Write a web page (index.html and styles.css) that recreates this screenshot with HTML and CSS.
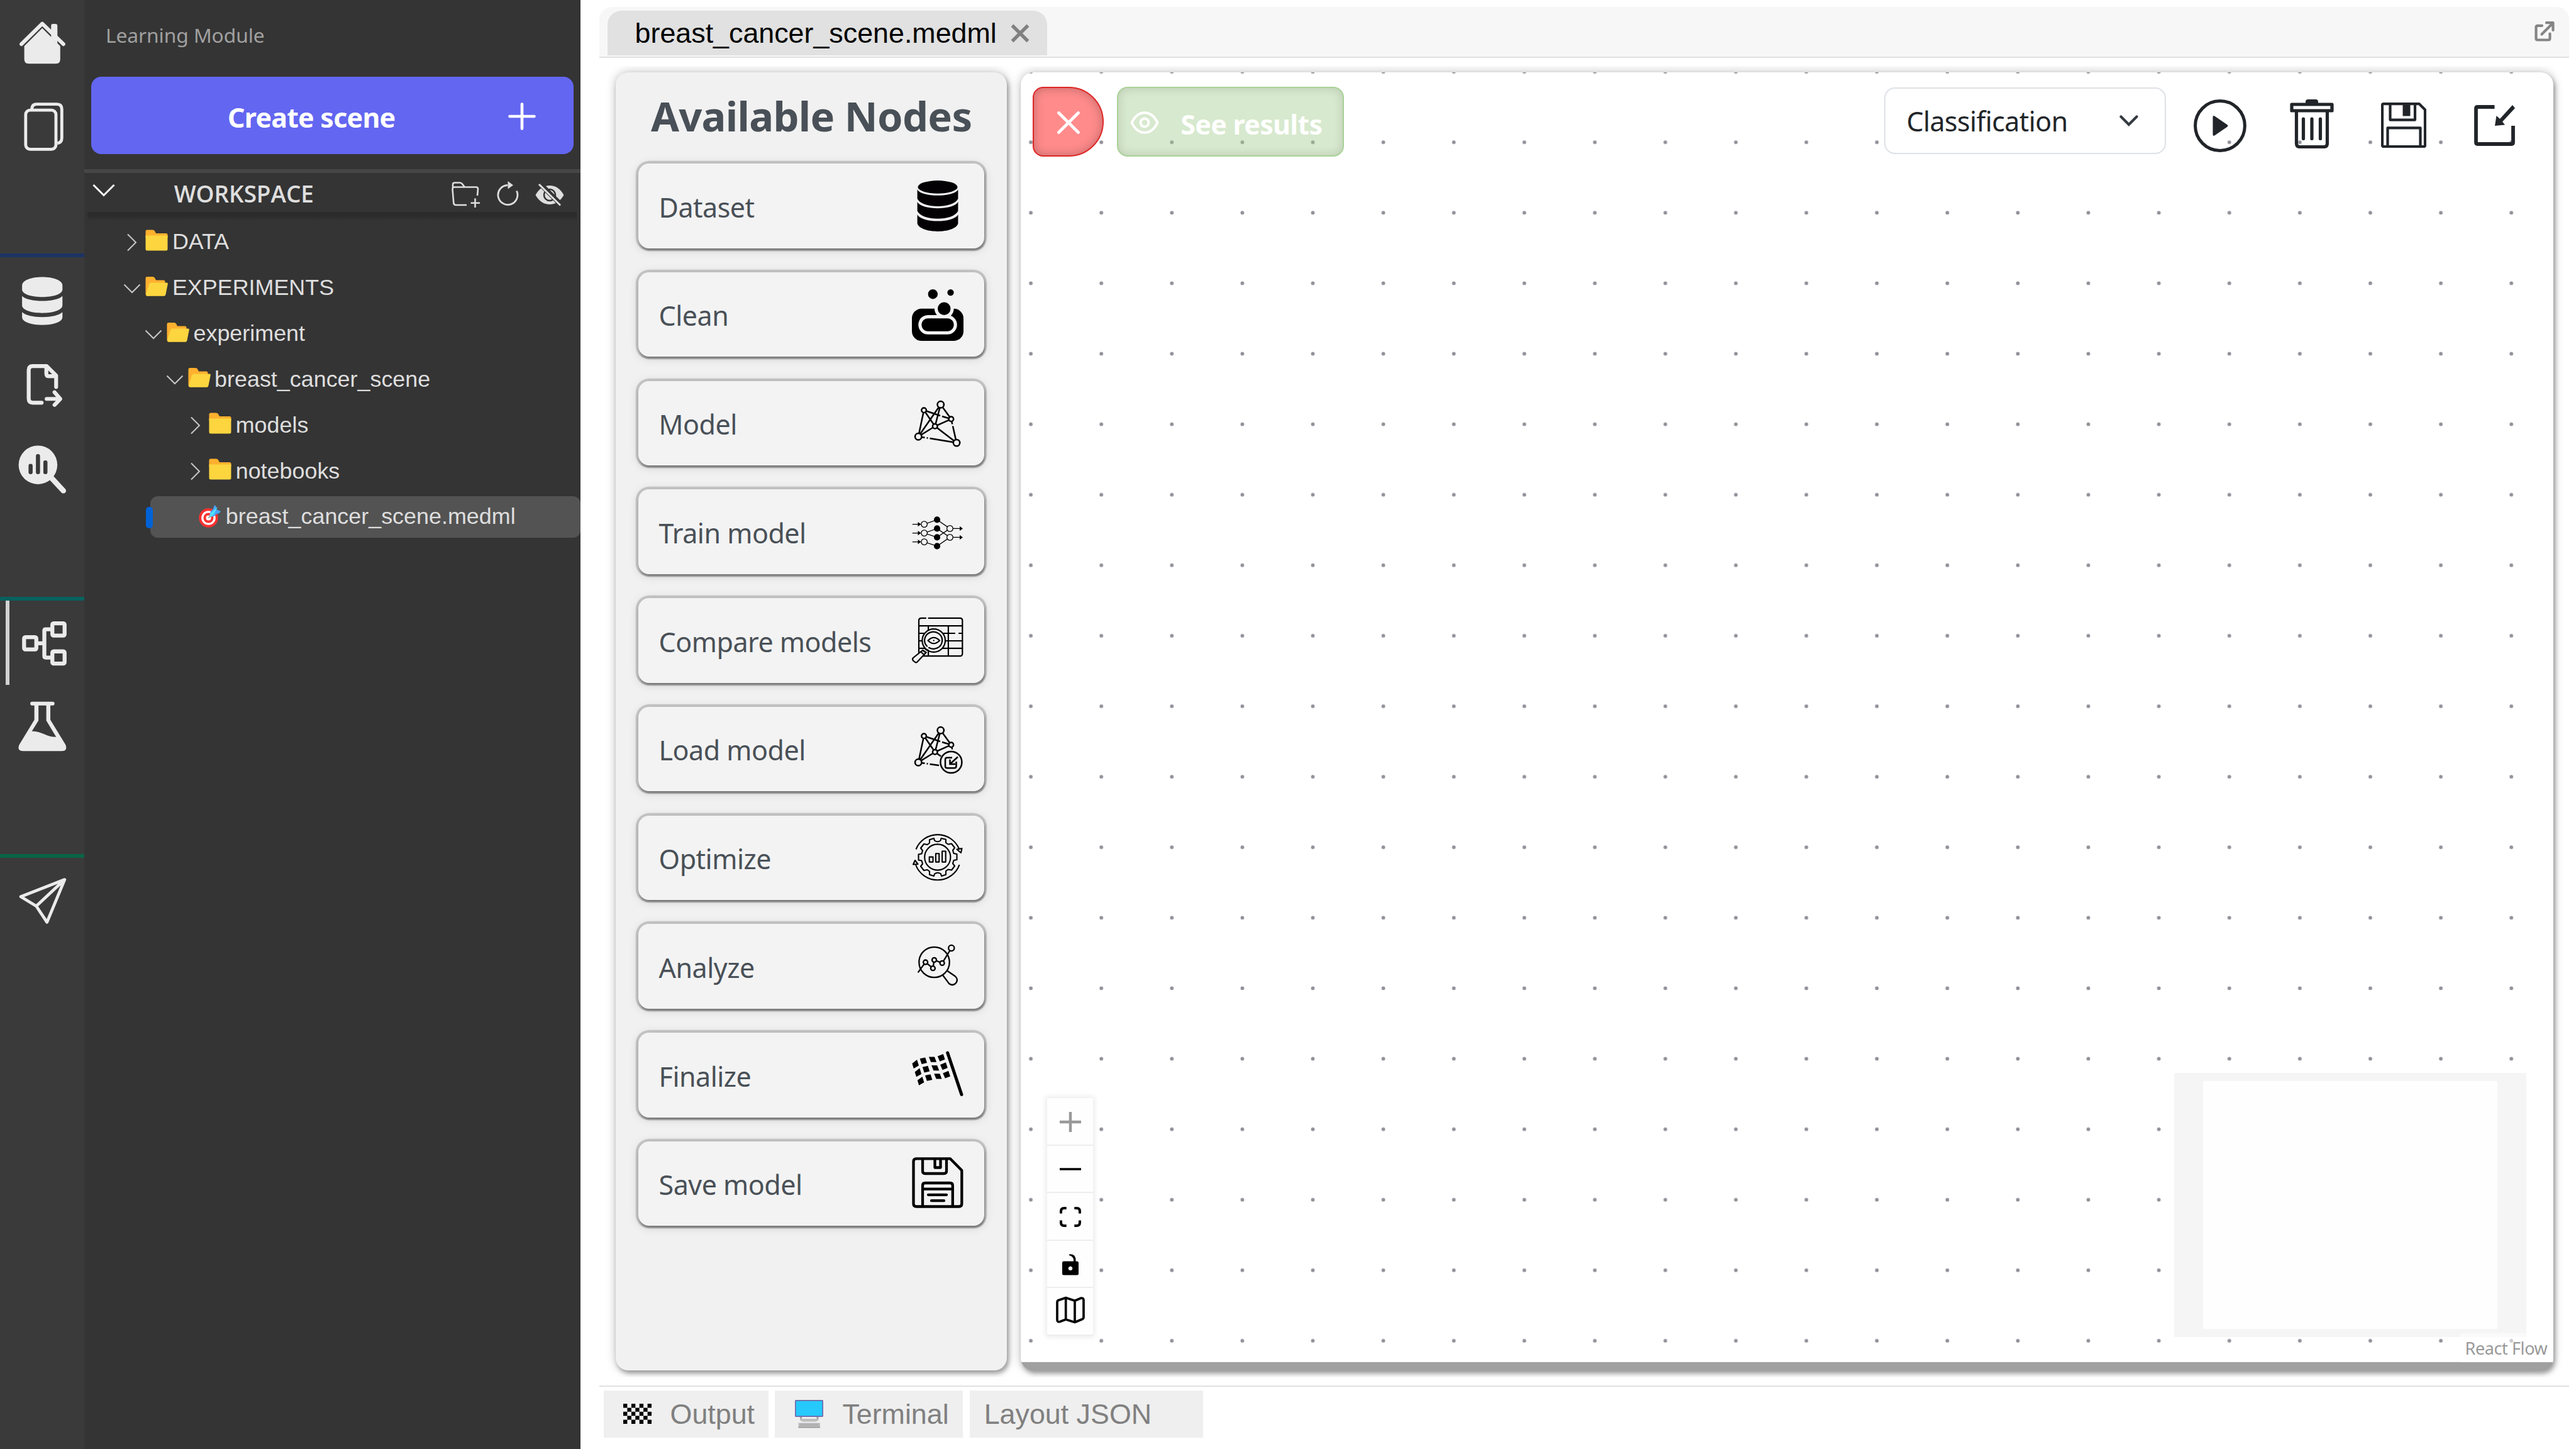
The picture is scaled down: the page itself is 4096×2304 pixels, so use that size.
FILE: index.html
```html
<!DOCTYPE html>
<html lang="en">
<head>
<meta charset="utf-8">
<title>Learning Module</title>
<link rel="stylesheet" href="styles.css">
</head>
<body>
<svg class="defs" aria-hidden="true">
  <symbol id="chev-right" viewBox="0 0 34 34"><path d="M10 4.500 23 17.500 10 30.500" fill="none" stroke="#c8c8c8" stroke-width="2"/></symbol>
  <symbol id="chev-down" viewBox="0 0 34 34"><path d="M4.500 11.500 17 24 29.500 11.500" fill="none" stroke="#c8c8c8" stroke-width="2"/></symbol>
  <symbol id="folder" viewBox="0 0 36 36"><path d="M3 1.500h9q2.500 0 3.500 2.500l1.500 3h16q2.500 0 2.500 2.500V14H.5V4Q.5 1.500 3 1.500z" fill="#ffb02e"/><path d="M.5 10.500h35V32q0 2.500-2.500 2.500H3Q.5 34.500.5 32z" fill="#fcd53f"/></symbol>
  <symbol id="folder-open" viewBox="0 0 36 36"><path d="M3 3h9q2.500 0 3.500 2.500L17 8.500h12q2.500 0 2.500 2.500v20L4 33.500Q.5 33.500.5 30V5.500Q.5 3 3 3z" fill="#ffb02e"/><path d="M9 12.500h25.500q1.500 0 1.300 2L32.500 31q-.5 2.800-2.500 2.800H4q-3.200 0-3-3L6 15q.8-2.500 3-2.500z" fill="#fcd53f"/></symbol>
</svg>
<div class="app">
  <nav class="rail">
    <div class="rail-group g1">
      <svg class="rail-icon" viewBox="0 0 134 134"><path d="M81 59V41q0-3 3-3h4q3 0 3 3v28z" fill="#ebebeb"/><path d="M34 70 67 37.500 100.500 70" fill="none" stroke="#ebebeb" stroke-width="6" stroke-linecap="round" stroke-linejoin="round"/><path d="M67 44.600 95.500 73V94q0 7-7 7h-43q-7 0-7-7V73z" fill="#ebebeb"/></svg>
      <svg class="rail-icon" viewBox="0 0 134 134" fill="none" stroke="#ebebeb" stroke-width="4.800"><rect x="40.700" y="41" width="48" height="62" rx="7"/><path d="M50.500 40q0-8.500 7.500-8.500h32q8 0 8 8V85q0 7.500-7 8.500"/></svg>
    </div>
    <div class="rail-group g2">
      <svg class="rail-icon" viewBox="0 0 134 134" fill="#ebebeb"><path d="M35 45C35 27 99 27 99 45v6C99 67 35 67 35 51z"/><path d="M35 61.600C45 72 89 72 99 61.600V76C99 92.500 35 92.500 35 76z"/><path d="M35 87C45 97.500 89 97.500 99 87v8c0 16.500-64 16.500-64 0z"/></svg>
      <svg class="rail-icon" viewBox="0 0 134 134" fill="none" stroke="#ebebeb" stroke-width="6.200" stroke-linecap="round" stroke-linejoin="round"><path d="M66 97H52q-6.500 0-6.500-6.500v-45Q45.500 39 52 39h22l15 15v18M73.500 40v11q0 4 4 4H89M74 91h21M86.500 80.500 95.500 91 86.500 100.500"/></svg>
      <svg class="rail-icon" viewBox="0 0 134 134"><circle cx="60.200" cy="61" r="30.700" fill="#ebebeb"/><path d="M80 80 100.500 102" stroke="#ebebeb" stroke-width="8.500" stroke-linecap="round"/><path d="M48.500 62.500v10M60.200 47v25.500M72 57v15.500" stroke="#3a3a3a" stroke-width="6.500" stroke-linecap="round"/></svg>
    </div>
    <div class="rail-group g3">
      <div class="rail-active"><svg class="rail-icon" viewBox="0 0 134 134" fill="none" stroke="#ebebeb" stroke-width="6.300"><rect x="38.200" y="58" width="19.400" height="19.400" rx="2"/><rect x="83" y="36" width="19.400" height="19.400" rx="2"/><rect x="83" y="80.500" width="19.400" height="19.400" rx="2"/><path d="M60 67.700h10.500M81 45.500H72.500q-2.200 0-2.200 2.200v40.400q0 2.200 2.200 2.200H81"/></svg></div>
      <svg class="rail-icon" viewBox="0 0 134 134"><path fill="#ebebeb" fill-rule="evenodd" d="M51 26.700h32.500q3 0 3 3t-3 3h-3.700v22.600L104 95q3.500 10-6 10H36.500q-10-.5-6-10L54.500 55.300V32.700H51q-3 0-3-3t3-3zM61 32.700v24L50.500 73.500c15-1 23 9.500 38.500 9L73.400 56.700v-24z"/></svg>
    </div>
    <div class="rail-group g4">
      <svg class="rail-icon" viewBox="0 0 134 134" fill="none" stroke="#ebebeb" stroke-width="4.800" stroke-linejoin="round"><path d="M102.500 34.500 33 61.500 57.500 76.500 74.500 102zM102.500 34.500 57.500 76.500"/></svg>
    </div>
  </nav>

  <aside class="side">
    <div class="side-title">Learning Module</div>
    <button class="create"><span class="create-label">Create scene</span><svg class="create-plus" viewBox="0 0 44 44"><path d="M22 2.500v39M2.500 22h39" stroke="#fff" stroke-width="4.600" stroke-linecap="round"/></svg></button>
    <div class="ws-head">
      <svg class="ws-chev" viewBox="0 0 36 22"><path d="M1.500 2 18 18.500 34.500 2" fill="none" stroke="#fff" stroke-width="3"/></svg>
      <span class="ws-label">WORKSPACE</span>
      <svg class="ws-folder" viewBox="0 0 46 42" fill="none" stroke="#dedede" stroke-width="2.600"><path d="M25 37H8q-3.500 0-3.700-3.500L2.500 12q0-3.500 3-3.500h34.500q3.300 0 3 3.500l-1 10M3 10V4.500q0-3 3-3h8.500q2 0 3.500 2l3.500 4.500"/><path d="M38.500 26.500v14.500M31.500 33.700H46"/></svg>
      <svg class="ws-refresh" viewBox="0 0 36 40"><path d="M31.500 15.500A15.500 15.500 0 1 1 17 6.500" fill="none" stroke="#dedede" stroke-width="2.800"/><path d="M17.500 0 26 6.500 17.500 12.500z" fill="#dedede"/></svg>
      <svg class="ws-eye" viewBox="0 0 46 36"><path d="M.5 18Q9 3 23 3t22.500 15Q37 33 23 33T.5 18z" fill="#dedede"/><circle cx="23" cy="18" r="9" fill="#dedede" stroke="#343434" stroke-width="2.600"/><path d="M8 .5 42.500 35" stroke="#343434" stroke-width="8"/><path d="M6 1 40 34.500" stroke="#dedede" stroke-width="3"/></svg>
    </div>
    <div class="ws-shadow"></div>
    <div class="tree">
      <div class="row"><svg class="chev"><use href="#chev-right"/></svg><svg class="fold"><use href="#folder"/></svg><span>DATA</span></div>
      <div class="row"><svg class="chev"><use href="#chev-down"/></svg><svg class="fold"><use href="#folder-open"/></svg><span>EXPERIMENTS</span></div>
      <div class="row l1"><svg class="chev"><use href="#chev-down"/></svg><svg class="fold"><use href="#folder-open"/></svg><span>experiment</span></div>
      <div class="row l2"><svg class="chev"><use href="#chev-down"/></svg><svg class="fold"><use href="#folder-open"/></svg><span>breast_cancer_scene</span></div>
      <div class="row l3"><svg class="chev"><use href="#chev-right"/></svg><svg class="fold"><use href="#folder"/></svg><span>models</span></div>
      <div class="row l3"><svg class="chev"><use href="#chev-right"/></svg><svg class="fold"><use href="#folder"/></svg><span>notebooks</span></div>
      <div class="row selected"><svg class="target" viewBox="0 0 36 36"><circle cx="15.500" cy="20.500" r="15.200" fill="#f8312f"/><circle cx="15.500" cy="20.500" r="11.300" fill="#fff"/><circle cx="15.500" cy="20.500" r="8" fill="#f8312f"/><circle cx="15.500" cy="20.500" r="4" fill="#fff"/><path d="M15.500 20.500 27 8" stroke="#9b9b9b" stroke-width="2"/><path d="M18 18q-1.500-7 5-12l2-6q4 2 3 7l7 3q-3 5-7 4-4 6-10 4z" fill="#46a4fb"/><path d="M17.500 18.500q-1-4 3.500-7.500l9-8-5 10q-3 6-7.500 5.500z" fill="#50e2ff"/></svg><span>breast_cancer_scene.medml</span></div>
    </div>
  </aside>

  <main class="main">
    <header class="tabs">
      <div class="tab"><span>breast_cancer_scene.medml</span><svg class="tab-x" viewBox="0 0 30 30"><path d="M2.500 2.500l25 25M27.500 2.500l-25 25" stroke="#808080" stroke-width="5.400"/></svg></div>
      <svg class="popout" viewBox="0 0 32 32" fill="none" stroke="#858585" stroke-width="4.200" stroke-linecap="round" stroke-linejoin="round"><path d="M12 6.800H5q-2.500 0-2.500 2.500V27q0 2.500 2.500 2.500h17q2.500 0 2.500-2.500v-7.500M11.500 20.500 29 3M19 2.200h10.500V14"/></svg>
    </header>

    <div class="work">
      <section class="nodes">
        <h2 class="nodes-title">Available Nodes</h2>
        <div class="card"><span>Dataset</span><svg class="ico" viewBox="0 0 82 82" fill="#030104"><ellipse cx="41" cy="12.400" rx="31.500" ry="10.300"/><path d="M8.600 16.400C16 29 66 29 73.400 16.400V31C66 47 16 47 8.600 31zM8.600 36C16 49.600 66 49.600 73.400 36V50.500C66 66.800 16 66.800 8.600 50.500zM8.600 56.200C16 70 66 70 73.400 56.200V70.500C68 87 14 87 8.600 70.500z"/></svg></div>
        <div class="card"><span>Clean</span><svg class="ico low" viewBox="0 0 512 512"><path d="M208 96a48 48 0 1 0 0-96 48 48 0 1 0 0 96zm112 160a64 64 0 1 0 0-128 64 64 0 1 0 0 128zM416 32a32 32 0 1 0-64 0 32 32 0 1 0 64 0zm0 160c0 27.600-11.700 52.500-30.400 70.100C422.100 275.700 448 310.800 448 352c0 53-43 96-96 96H160c-53 0-96-43-96-96s43-96 96-96h88.400c-15.200-17-24.400-39.400-24.400-64H96c-53 0-96 43-96 96v128c0 53 43 96 96 96h320c53 0 96-43 96-96V288c0-53-43-96-96-96zM160 288c-35.300 0-64 28.700-64 64s28.700 64 64 64h192c35.300 0 64-28.700 64-64s-28.700-64-64-64z"/></svg></div>
        <div class="card"><span>Model</span><svg class="ico" viewBox="0 0 82 82" fill="#f3f3f3" stroke="#000" stroke-width="2.500"><path fill="none" d="M45.700 12.300 10.200 63.300M45.700 12.300 36.700 46.800M45.700 12.300 62.400 35.300M19.100 21.300 10.200 63.300M19.100 21.300 36.700 46.800M19.100 21.300 45 30M48 31 62.400 35.300 36.700 46.800 71 73.100M36.700 46.800 10.200 63.300 20.500 64.800M23.500 65.300l2 .3M28.500 66 71 73.100M62.400 35.300 64.200 43.500M65 46.500 71 73.100"/><circle cx="19.100" cy="21.300" r="3.800"/><circle cx="62.400" cy="35.300" r="3.800"/><circle cx="36.700" cy="46.800" r="3.800"/><circle cx="10.200" cy="63.300" r="5.200"/><circle cx="71" cy="73.100" r="5.200"/><circle cx="45.700" cy="12.300" r="5.200"/></svg></div>
        <div class="card"><span>Train model</span><svg class="ico" viewBox="0 0 82 82" fill="none" stroke="#000" stroke-width="1.300"><path d="M19.600 30.600 40 23.400 60.400 37.400M19.600 44.600 40 37.400 60.400 51.400M19.600 44.600 40 51.400 60.400 37.400M19.600 58.600 40 65.400 60.400 51.400M.8 30.600h10M.8 44.600h10M.8 58.600h10M60.400 37.400h16M60.400 51.400h16"/><g fill="#f3f3f3"><circle cx="19.600" cy="30.600" r="4.800"/><circle cx="19.600" cy="44.600" r="4.800"/><circle cx="19.600" cy="58.600" r="4.800"/><circle cx="60.400" cy="37.400" r="4.800"/><circle cx="60.400" cy="51.400" r="4.800"/></g><g fill="#000"><circle cx="40" cy="23.400" r="4.400"/><circle cx="40" cy="37.400" r="4.400"/><circle cx="40" cy="51.400" r="4.400"/><circle cx="40" cy="65.400" r="4.400"/><path stroke="none" d="M9.500 27l5 3.600-5 3.600zM9.500 41l5 3.600-5 3.600zM9.500 55l5 3.600-5 3.600zM76 33.800l5 3.600-5 3.600zM76 47.800l5 3.600-5 3.600z"/></g></svg></div>
        <div class="card"><span>Compare models</span><svg class="ico" viewBox="0 0 82 82" fill="none" stroke="#000" stroke-width="2.200" stroke-linecap="round"><path d="M22 6.800H15q-4 0-4 4V64M26.500 6.800h49.800q4 0 4 4v52.400q0 4-4 4H17M11 19.100h69.300M11 31h57M75 31h5.300M11 43h69.300M11 54.800h69.300M26.100 19.100v48M57.900 19.100v48"/><circle cx="34.700" cy="42.500" r="18.300" fill="#f3f3f3"/><path d="M24 51.500A14 13.500 0 1 1 27 53.800"/><path d="M25.700 42.500q9-9.500 18.300 0-9.300 9.500-18.300 0zM34.700 42.400v.2"/><path d="M17 58 2 70q-2 2.500 0 4.500l2.500 2q2 1.800 4 0L22.500 61.500z" fill="#f3f3f3"/><path d="M14 60.500 19.500 65M17 58l5.500 3.500M20 54.500l3 3 2.500 0"/></svg></div>
        <div class="card"><span>Load model</span><svg class="ico" viewBox="0 0 82 82" fill="#f3f3f3" stroke="#000" stroke-width="2.500"><path fill="none" d="M45.700 12.300 10.200 63.300M45.700 12.300 36.700 46.800M45.700 12.300 62.400 35.300M19.100 21.300 10.200 63.300M19.100 21.300 36.700 46.800M19.100 21.300 45 30M48 31 62.400 35.300 36.700 46.800 46 53.500M36.700 46.800 10.200 63.300 20.500 64.800M23.500 65.300l2 .3M28.500 66 43 68M62.400 35.300 64.200 42.500"/><circle cx="19.100" cy="21.300" r="3.800"/><circle cx="62.400" cy="35.300" r="3.800"/><circle cx="36.700" cy="46.800" r="3.800"/><circle cx="10.200" cy="63.300" r="5.200"/><circle cx="45.700" cy="12.300" r="5.200"/><circle cx="62.400" cy="63" r="17"/><path fill="none" d="M64 55.700H56q-3 0-3 3v10.500q0 3 3 3h11.500q3 0 3-3V62M73 54.500 60.500 66M60.500 58.500V66H69"/></svg></div>
        <div class="card"><span>Optimize</span><svg class="ico" viewBox="0 0 82 82" fill="none" stroke="#000" stroke-width="2.100" stroke-linejoin="round"><circle cx="40.800" cy="41" r="20.600"/><path d="M6.500 28.500A37 37 0 0 1 75.500 29M75.500 53A37 37 0 0 1 6 53"/><path d="M71.500 28.500l8-1.500-1.500 7zM2 52.500 5 46l4.500 6z"/><path d="M27.700 40.600h5.800v8h-5.800zM37.900 35.300h5.300v13.300h-5.300zM48.100 31.500h5.600v17.100h-5.600z"/><path d="M36 14.500 35 11l-7 2.200v5.300l-3.500 2.500-5.500-1-5 6.500 3 4-1.500 5-5 1v9l5 1 1.500 5-3 4 5 6.500 5.500-1 3.500 2.500v5.300l7 2.200 1-3.500q5-3.500 10 0l1 3.500 7-2.200V63l3.500-2.500 5.500 1 5-6.500-3-4 1.500-5 5-1v-9l-5-1-1.500-5 3-4-5-6.500-5.500 1-3.500-2.500v-5.300L46.500 11l-1 3.500q-4.500 3.500-9.500 0z"/></svg></div>
        <div class="card"><span>Analyze</span><svg class="ico" viewBox="0 0 82 82" fill="none" stroke="#000" stroke-width="2.300" stroke-linecap="round"><circle cx="35.500" cy="36" r="24.200"/><path d="M10.200 51.600 21.600 36 33.400 45.700 35.500 32.400 48.100 37.400 62.800 13.500"/><g fill="#f3f3f3"><circle cx="21.600" cy="36" r="3.500"/><circle cx="33.400" cy="45.700" r="3.500"/><circle cx="35.500" cy="32.400" r="3.500"/><circle cx="48.100" cy="37.400" r="3.500"/><circle cx="62.800" cy="13.500" r="4.600"/></g><path d="M56 49.500 69 58.500q5 4.500 1.500 10-5 6-11.500 1.500L49 56.500"/></svg></div>
        <div class="card"><span>Finalize</span><svg class="ico" viewBox="0 0 82 82"><path d="M56.700 7 79 73.500" stroke="#000" stroke-width="5" stroke-linecap="round"/><g id="flag-row"><path d="M.4 24 8.100 18.100 11 27.300 2.800 31.900zM12.600 16.300 21.200 14.400 24 23.100 15.500 25zM26.900 13.500H35.900L39.100 21.800H30.200zM40.800 12.600 49.700 8.900 52.600 17.600 44.400 20.800z"/></g><use href="#flag-row" x="4.200" y="13.400"/><use href="#flag-row" x="8.400" y="26.800"/></svg></div>
        <div class="card"><span>Save model</span><svg class="ico" viewBox="0 0 82 82" fill="none" stroke="#000" stroke-width="4.300" stroke-linejoin="round" stroke-linecap="round"><path d="M7 2.400H61L79.300 21v53q0 4.500-4.500 4.500H7q-4.500 0-4.500-4.500V7Q2.500 2.400 7 2.400z"/><path d="M17 3v19q0 4 4 4h30q4 0 4-4V3M36.500 3v13.500h9V3M17 78V45q0-4 4-4h39.800q4 0 4 4v33M17 50.600h47.800M26 59.800h29M31 69.200h20"/></svg></div>
      </section>

      <section class="flow">
        <svg class="dots"><defs><pattern id="grid" x="16.100" y="-.9" width="112.100" height="112.100" patternUnits="userSpaceOnUse" patternTransform="translate(-56 -56)"><circle cx="56" cy="56" r="2.900" fill="#91919a"/></pattern></defs><rect width="100%" height="100%" fill="url(#grid)"/></svg>
        <div class="flow-left">
          <button class="btn-close"><svg viewBox="0 0 36 36"><path d="M2.500 2.500l31 31M33.500 2.500l-31 31" stroke="#fff" stroke-width="4.800" stroke-linecap="round"/></svg></button>
          <button class="btn-results"><svg viewBox="0 0 46 36" fill="none" stroke="#fff" stroke-width="4"><path d="M2.500 18Q10 2.200 23 2.200T43.500 18Q36 33.800 23 33.800T2.500 18z"/><circle cx="23" cy="18" r="6.500"/></svg><span>See results</span></button>
        </div>
        <div class="flow-right">
          <div class="select"><span>Classification</span><svg class="select-chev" viewBox="0 0 30 18"><path d="M2.500 2.500 15 15 27.500 2.500" fill="none" stroke="#343a40" stroke-width="4.200" stroke-linecap="round"/></svg></div>
          <svg class="tool play" viewBox="0 0 84 84"><circle cx="42" cy="42" r="39.400" fill="none" stroke="#212529" stroke-width="5"/><path d="M30.500 28.500q0-4 3.500-1.500l19 13q3 2 0 4l-19 13q-3.500 2.500-3.500-1.500z" fill="#212529"/></svg>
          <svg class="tool trash" viewBox="0 0 70 78" fill="none" stroke="#212529" stroke-width="5.200" stroke-linejoin="round"><rect x="3" y="8" width="64" height="10"/><path d="M25 7V4q0-4 4-4h12q4 0 4 4v3z" fill="#212529" stroke="none"/><path d="M10.500 20v50q0 5.500 5.500 5.500h38q5.500 0 5.500-5.500V20M21.500 31v31.500M35 31v31.500M48.500 31v31.500" stroke-linecap="round"/></svg>
          <svg class="tool disk" viewBox="0 0 72 72" fill="none" stroke="#212529" stroke-width="4.200" stroke-linejoin="round"><path d="M4 2.100H60.500L70 11.500V68q0 2-2 2H4q-2 0-2-2V4q0-1.900 2-1.900z"/><path d="M14.500 2v25.600h39.500V2M10.500 70V40.300H62.500V70"/><path d="M34.500 2h12v19.500h-12z" fill="#212529" stroke="none"/></svg>
          <svg class="tool import" viewBox="0 0 66 66"><path d="M32.500 3H5.500Q3 3 3 5.500v54Q3 62 5.500 62h54q2.500 0 2.500-2.500V33" fill="none" stroke="#212529" stroke-width="5.800"/><path d="M61 0 65 5 45 26.500 49 31.500 33 33 35.500 17 41 22z" fill="#212529"/></svg>
        </div>
        <div class="controls">
          <div class="ctl"><svg viewBox="0 0 34 32"><path d="M0 16h34M17 0v32" stroke="#999" stroke-width="4.400"/></svg></div>
          <div class="ctl"><svg viewBox="0 0 34 32"><path d="M0 16h34" stroke="#000" stroke-width="3.600"/></svg></div>
          <div class="ctl"><svg viewBox="0 0 34 32" fill="none" stroke="#000" stroke-width="4"><path d="M10.700 2H7Q2 2 2 7v3.500M23.300 2H27q5 0 5 5v3.500M10.700 30H7q-5 0-5-5v-3.500M23.300 30H27q5 0 5-5v-3.500"/></svg></div>
          <div class="ctl lock"><svg viewBox="0 0 34 34"><path fill-rule="evenodd" d="M6.500 11.500H22V8.500q-1-5-7-6.500-.6-1.300 1-1.700 8.500-.5 9.500 7.500v3.700h2q2.500 0 2.500 2.500v17q0 2.500-2.500 2.500h-21Q4 33.500 4 31V14q0-2.500 2.500-2.500zM17 19.500a3.300 3.300 0 1 0 .01 0z"/></svg></div>
          <div class="ctl map"><svg viewBox="0 0 46 44" fill="none" stroke="#000" stroke-width="3.700" stroke-linejoin="round"><path d="M2 9.500q0-2 2-3L15.700 2.500 30 7.200 39.500 3.200q4.500-.7 4.500 3v27.300q0 2-2 3L30 41.500 15.700 37 6.500 40.500Q2 41.500 2 38zM15.700 2.500V37M30 7.200v34.300"/></svg></div>
        </div>
        <div class="minimap"><div class="viewport"></div></div>
        <div class="credit">React Flow</div>
      </section>
    </div>

    <footer class="bottom">
      <div class="btab"><svg class="b-ico" viewBox="0 0 45 32"><rect width="45" height="32" fill="#f4f4f4"/><path d="M0 0h6.400v6.400H0zM12.900 0h6.400v6.400h-6.400zM25.700 0h6.400v6.400h-6.400zM38.600 0H45v6.400h-6.400zM6.400 6.400h6.500v6.400H6.400zM19.300 6.400h6.400v6.400h-6.400zM32.100 6.400h6.500v6.400h-6.500zM0 12.800h6.400v6.400H0zM12.900 12.800h6.400v6.400h-6.400zM25.700 12.800h6.400v6.400h-6.400zM38.600 12.800H45v6.400h-6.400zM6.400 19.200h6.500v6.400H6.400zM19.300 19.200h6.400v6.400h-6.400zM32.100 19.200h6.500v6.400h-6.500zM0 25.600h6.400V32H0zM12.900 25.600h6.400V32h-6.400zM25.700 25.600h6.400V32h-6.400zM38.600 25.600H45V32h-6.400z"/></svg><span>Output</span></div>
      <div class="btab t2"><svg class="b-ico pc" viewBox="0 0 45 45"><rect x=".8" y=".8" width="43.400" height="25.400" rx="1" fill="#26c9fc" stroke="#7367a8" stroke-width="1.700"/><path d="M9.500 27v5M36 27v5" stroke="#a0a0a0" stroke-width="3"/><path d="M8 29.500h29v3L33.500 34.500h-21L8 32.500z" fill="#bdbdbd"/><rect x="12" y="28" width="21" height="2" fill="#efefef"/><rect x="5.500" y="36.500" width="34.500" height="8" fill="#bdbdbd"/><path d="M8 38.500h30M8 40.500h30" stroke="#999" stroke-width="1" stroke-dasharray="1.500 1"/><path d="M5.500 43.500H40" stroke="#999" stroke-width="1.500"/></svg><span>Terminal</span></div>
      <div class="btab t3"><span>Layout JSON</span></div>
    </footer>
  </main>
</div>
</body>
</html>
```
FILE: styles.css
```css
* { box-sizing: border-box; }
body {
  margin: 0;
  background: #fff;
  font-family: "Noto Sans", "Open Sans", sans-serif;
}
button { font: inherit; border: 0; padding: 0; margin: 0; }
svg { display: block; flex: none; }
.defs { position: absolute; width: 0; height: 0; }
.app { display: flex; width: 4096px; height: 2304px; overflow: hidden; }

/* activity rail */
.rail { width: 134.4px; background: #3a3a3a; flex: none; }
.rail-group { display: flex; flex-direction: column; border-top: 6.2px solid; }
.g1 { border-top: 0; height: 402.8px; }
.g2 { border-color: #1c3464; height: 546px; }
.g3 { border-color: #07625f; height: 409.2px; }
.g4 { border-color: #0b6445; }
.rail-icon { width: 134.4px; height: 134.4px; }
.rail-active { height: 134.4px; background: linear-gradient(#d2d2d2, #d2d2d2) 8.500px 0 / 6.400px 100% no-repeat; }

/* workspace side panel */
.side { width: 789px; flex: none; background: #343434; color: #dedede; display: flex; flex-direction: column; }
.side-title { height: 121.6px; padding: 34px 0 0 33.500px; font-size: 31.800px; letter-spacing: -.1px; line-height: 44px; color: #a0a0a0; white-space: nowrap; }
.create { margin-left: 10.600px; width: 767.500px; height: 123.800px; border-radius: 16px; background: #6366f1; color: #fff; display: flex; align-items: center; padding: 0 60px 0 0; }
.create-label { flex: 1; text-align: center; padding-left: 37px; padding-top: 7px; font-weight: 700; font-size: 43px; letter-spacing: -.800px; }
.create-plus { width: 44px; height: 44px; margin-top: 3px; }
.ws-head { margin-top: 23.300px; height: 68.600px; border-top: 6.200px solid #464646; display: flex; align-items: center; position: relative; }
.ws-chev { width: 36px; height: 22px; margin: -6px 0 0 12.300px; }
.ws-label { margin-left: 94px; width: 440px; font-family: "Open Sans", "Noto Sans", sans-serif; font-weight: 600; font-size: 37px; line-height: 50px; padding-top: 5px; letter-spacing: -.1px; }
.ws-folder { width: 46px; height: 42px; margin-top: 8px; }
.ws-refresh { width: 36px; height: 40px; margin: 4px 0 0 27px; }
.ws-eye { width: 46px; height: 36px; margin: 8px 0 0 25px; }
.ws-shadow { height: 14px; margin: 0 6px 0 5px; background: linear-gradient(#2b2b2b 40%, #343434); }
.tree { font-family: "Liberation Sans", Arial, sans-serif; font-size: 35.900px; margin-top: -2.800px; }
.row { height: 72.850px; display: flex; align-items: center; padding-left: 59px; white-space: nowrap; }
.l1 { padding-left: 92.600px; }
.l2 { padding-left: 126.200px; }
.l3 { padding-left: 159.800px; }
.chev { width: 34px; height: 34px; }
.fold { width: 36px; height: 36px; margin: -6px 6.500px 0 4px; }
.selected { height: 66.400px; margin: 3.200px 0 0 104.400px; padding-left: 77.500px; background: #535353; border-radius: 12px; position: relative; }
.selected::before { content: ""; position: absolute; left: -6.500px; top: 17px; width: 11px; height: 34px; border-radius: 5px; background: #0062d6; }
.target { width: 36px; height: 36px; margin: -2px 6.500px 0 0; }

/* main area */
.main { flex: 1; min-width: 0; padding: 10.600px 11px 0 29.700px; display: flex; flex-direction: column; }
.tabs { height: 81px; background: #f7f7f7; border-bottom: 2.200px solid #e1e1e1; border-radius: 20px 20px 0 0; display: flex; justify-content: space-between; align-items: flex-start; padding: 6.600px 23.500px 0 13px; }
.tab { width: 699px; height: 70.400px; border-radius: 22px 22px 0 0; background: #e1e1e1; color: #000; display: flex; align-items: center; padding: 1px 0 0 43.500px; font-family: "Liberation Sans", Arial, sans-serif; font-size: 44.800px; }
.tab-x { width: 30px; height: 30px; margin-left: 22px; }
.popout { width: 32px; height: 32px; margin-top: 17px; }

.work { height: 2085px; margin-top: 13.400px; padding: 10px 25px 10.600px 25.800px; overflow: hidden; display: flex; gap: 21.300px; flex: none; }
.nodes { width: 622.500px; flex: none; border-radius: 20px; background: #f1f1f1; padding: 0 36.200px; display: flex; flex-direction: column; gap: 38.250px; box-shadow: 0 0 16px rgba(0,0,0,.26), 3px 5px 7px rgba(0,0,0,.3); }
.nodes-title { margin: 0; height: 107px; font-size: 65px; line-height: 90px; padding-top: 24px; letter-spacing: -.7px; color: #495057; text-align: center; white-space: nowrap; }
.card { height: 134.500px; flex: none; border-radius: 17px; background: #f3f3f3; color: #495057; display: flex; align-items: center; justify-content: space-between; padding: 0 33.500px 0 32.500px; font-size: 43px; letter-spacing: -.500px; box-shadow: 1px 3px 3px -.5px rgba(0,0,0,.36), 0 0 0 4.200px rgba(0,0,0,.16), 0 2px 16px rgba(0,0,0,.16); }
.card span { padding-top: 3.500px; }
.ico { width: 82px; height: 82px; margin-top: -2.500px; overflow: visible; }
.low { margin-top: 1.500px; }

.flow { flex: 1; position: relative; border-radius: 20px; background: linear-gradient(#fff, #fff) 0 0 / 100% calc(100% - 13.200px) no-repeat #a0a0a0; box-shadow: 0 0 16px rgba(0,0,0,.26), 3px 5px 7px rgba(0,0,0,.3); }
.dots { position: absolute; inset: 0; width: 100%; height: calc(100% - 13.200px); border-radius: 20px 20px 0 0; }
.flow-left { position: absolute; left: 19.500px; top: 23.400px; display: flex; gap: 21px; }
.btn-close { width: 113px; height: 111px; border: 2.200px solid #dc2626; border-radius: 17px 56px 56px 17px; background: #ff8b8b; box-shadow: inset 0 0 16px rgba(0,0,0,.25); display: flex; align-items: center; justify-content: center; }
.btn-close svg { width: 36px; height: 36px; margin-top: 3px; }
.btn-results { width: 360.500px; height: 111px; border: 2.200px solid #a9d197; border-radius: 17px; background: rgba(162,203,141,.43); box-shadow: inset 0 0 16px rgba(0,0,0,.14); color: #fff; display: flex; align-items: center; padding-left: 19px; font-weight: 700; font-size: 43px; letter-spacing: -.700px; white-space: nowrap; }
.btn-results svg { width: 46px; height: 36px; margin: 3px 34px 0 0; }
.btn-results span { padding-top: 7px; }
.flow-right { position: absolute; right: 60px; top: 23.600px; display: flex; }
.select { width: 448px; height: 106.500px; border: 2.200px solid #dee2e6; border-radius: 17px; background: #fff; color: #212529; display: flex; align-items: center; justify-content: space-between; padding: 0 41.500px 0 34px; font-size: 43px; letter-spacing: -.600px; margin-right: 44.500px; }
.select span { padding-top: 1px; }
.select-chev { width: 30px; height: 18px; }
.tool { flex: none; }
.play { width: 84px; height: 84px; margin: 19px 69px 0 0; }
.trash { width: 70px; height: 78px; margin: 19px 74.500px 0 0; }
.disk { width: 72px; height: 72px; margin: 24.500px 76.500px 0 0; }
.import { width: 66px; height: 66px; margin-top: 28px; }
.controls { position: absolute; left: 42.600px; top: 1631.200px; width: 72.600px; box-shadow: 0 0 8px 2px rgba(0,0,0,.09); }
.ctl { height: 75.500px; background: #fefefe; border-bottom: 2px solid #eee; display: flex; align-items: center; justify-content: center; }
.ctl svg { width: 34px; height: 32px; margin-top: 2px; }
.lock svg { height: 34px; margin-top: 3px; }
.map svg { width: 46px; height: 44px; margin: 0 0 4px; }
.minimap { position: absolute; left: 1834px; top: 1591px; width: 560.400px; height: 420px; background: #f5f5f5; padding: 12.800px 46.200px; }
.viewport { height: 394px; background: #fefefe; }
.credit { position: absolute; right: 0; bottom: 13.200px; width: 149.500px; height: 46.600px; background: rgba(255,255,255,.5); color: #999; font-size: 27px; letter-spacing: -.400px; line-height: 37px; padding: 5px 0 0 9px; white-space: nowrap; }

.bottom { margin-top: 12.600px; border-top: 2.200px solid #e1e1e1; padding: 6.300px 0 0 6.500px; display: flex; gap: 10.300px; }
.btab { height: 74.700px; width: 262.500px; background: #efefef; color: #808080; display: flex; align-items: center; font-family: "Liberation Sans", Arial, sans-serif; font-size: 44.800px; padding-left: 31.500px; white-space: nowrap; }
.t2 { width: 299px; }
.t3 { width: 371px; padding-left: 23px; }
.b-ico { width: 45px; height: 32px; margin-right: 29.500px; }
.pc { height: 45px; margin-right: 30.500px; }
```
